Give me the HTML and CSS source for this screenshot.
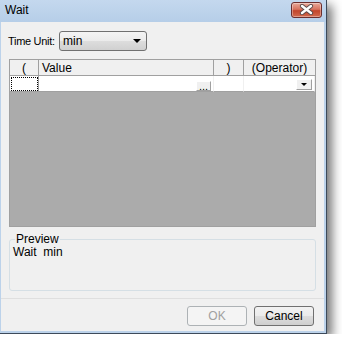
FILE: index.html
```html
<!DOCTYPE html>
<html lang="en">
<head>
  <meta charset="UTF-8">
  <title>Wait</title>
  <link rel="stylesheet" href="styles.css">
</head>
<body>

<div class="window">
  <!-- Title Bar -->
  <div class="titlebar">
    <span class="title">Wait</span>
    <button class="close-btn" type="button">
      <svg width="15" height="11" viewBox="0 0 15 11">
        <path d="M3 2 L12 9 M12 2 L3 9" stroke="#5a4a4a" stroke-width="4.2" stroke-linecap="round"/>
        <path d="M3 2 L12 9 M12 2 L3 9" stroke="#ffffff" stroke-width="2.4" stroke-linecap="round"/>
      </svg>
    </button>
  </div>

  <div class="client">
    <div class="unit-row">
      <span class="unit-label">Time Unit:</span>
      <div class="combo">
        <span>min</span>
        <span class="arrow"></span>
      </div>
    </div>

    <!-- Grid -->
    <div class="grid">
      <div class="grid-head">
        <div class="hcell center">(</div>
        <div class="hcell">Value</div>
        <div class="hcell center">)</div>
        <div class="hcell center last">(Operator)</div>
      </div>
      <div class="grid-row">
        <div class="dcell focus"></div>
        <div class="dcell end"><span class="dots-btn">...</span></div>
        <div class="dcell"></div>
        <div class="dcell end last"><span class="drop-btn"><span class="arrow small"></span></span></div>
      </div>
      <div class="grid-empty"></div>
    </div>

    <!-- Preview -->
    <div class="group">
      <span class="legend">Preview</span>
      <div class="preview-text">Wait&nbsp;&nbsp;min</div>
    </div>

    <div class="button-bar">
      <button type="button" class="dlg-btn disabled">OK</button>
      <button type="button" class="dlg-btn">Cancel</button>
    </div>
  </div>
</div>

</body>
</html>
```

FILE: styles.css
```css
body {
  margin: 0;
  background: #ffffff;
  font-family: "Liberation Sans", Arial, sans-serif;
  font-size: 11px;
  color: #000;
}
.window {
  width: 327px;
  height: 334px;
  padding: 0 2px 2px 1px;
  box-sizing: border-box;
  background: #bcd2ea;
  border-right: 1px solid #3d4a5a;
  border-bottom: 1px solid #3d4a5a;
  box-shadow: 5px 5px 10px rgba(0,0,0,0.55);
  display: flex;
  flex-direction: column;
}
.titlebar {
  height: 22px;
  margin: 0 -2px 0 -1px;
  background: linear-gradient(#c4d8ee, #b6cee8);
  display: flex;
  align-items: center;
  justify-content: space-between;
  padding: 0 4px 0 5px;
  box-sizing: border-box;
}
.title {
  font-size: 12px;
  padding-bottom: 2px;
}
.close-btn {
  width: 31px;
  height: 16px;
  margin-bottom: 3px;
  padding: 0;
  border: 1px solid #6b2e2e;
  border-radius: 3px;
  background: linear-gradient(#e9a99a 0%, #d7735f 45%, #c2452b 55%, #d26a4e 100%);
  display: flex;
  align-items: center;
  justify-content: center;
  box-shadow: inset 0 0 0 1px rgba(255,255,255,0.35);
}
.client {
  flex: 1;
  background: #f0f0f0;
  padding: 9px 8px 0 8px;
  display: flex;
  flex-direction: column;
}
.unit-row {
  display: flex;
  align-items: center;
  height: 20px;
}
.unit-label {
  width: 51px;
  margin-left: -1px;
  flex-shrink: 0;
  white-space: nowrap;
  font-size: 11px;
  letter-spacing: -0.3px;
}
.combo {
  width: 88px;
  height: 20px;
  box-sizing: border-box;
  border: 1px solid #707070;
  border-radius: 3px;
  background: linear-gradient(#f4f4f4 0%, #ebebeb 50%, #dddddd 51%, #d0d0d0 100%);
  display: flex;
  align-items: center;
  justify-content: space-between;
  padding: 0 5px 0 3px;
  font-size: 12px;
}
.arrow {
  width: 0;
  height: 0;
  border-left: 4px solid transparent;
  border-right: 4px solid transparent;
  border-top: 4px solid #000;
}
.arrow.small {
  border-left-width: 3px;
  border-right-width: 3px;
  border-top-width: 3px;
}
.grid {
  margin-top: 8px;
  height: 168px;
  box-sizing: border-box;
  border: 1px solid #a0a0a0;
  display: flex;
  flex-direction: column;
}
.grid-head, .grid-row {
  display: grid;
  grid-template-columns: 29px 175px 30px 1fr;
}
.hcell {
  height: 16px;
  box-sizing: border-box;
  border-right: 1px solid #a0a0a0;
  border-bottom: 1px solid #a0a0a0;
  background: #f0f0f0;
  padding: 1px 3px 0 3px;
  font-size: 12px;
  line-height: 14px;
}
.center {
  text-align: center;
}
.last {
  border-right: none;
}
.dcell {
  height: 16px;
  box-sizing: border-box;
  border-right: 1px solid #f0f0f0;
  border-bottom: 1px solid #a0a0a0;
  background: #fff;
  display: flex;
  justify-content: flex-end;
  align-items: flex-end;
}
.focus {
  outline: 1px dotted #000;
  outline-offset: -2px;
  border-right-color: #a0a0a0;
}
.dots-btn {
  width: 15px;
  height: 10px;
  margin-right: 2px;
  box-sizing: border-box;
  background: #f0f0f0;
  border-top: 1px solid #fff;
  border-left: 1px solid #fff;
  border-right: 1px solid #a0a0a0;
  border-bottom: 1px solid #a0a0a0;
  font-size: 11px;
  line-height: 8px;
  text-align: center;
  overflow: hidden;
}
.drop-btn {
  width: 16px;
  height: 11px;
  margin: 0 2px 1px 0;
  box-sizing: border-box;
  background: #f0f0f0;
  border-top: 1px solid #fff;
  border-left: 1px solid #fff;
  border-right: 1px solid #a0a0a0;
  border-bottom: 1px solid #a0a0a0;
  display: flex;
  align-items: center;
  justify-content: center;
}
.grid-empty {
  flex: 1;
  background: #ababab;
}
.group {
  position: relative;
  margin-top: 12px;
  height: 52px;
  box-sizing: border-box;
  border: 1px solid #d5dfe5;
  border-radius: 3px;
  padding: 6px 3px 0 3px;
}
.legend {
  position: absolute;
  top: -7px;
  left: 5px;
  padding: 0 1px;
  background: #f0f0f0;
  font-size: 12px;
  line-height: 13px;
}
.preview-text {
  font-size: 12px;
  line-height: 13px;
}
.button-bar {
  margin: 7px -8px 0 -8px;
  border-top: 1px solid #dfdfdf;
  padding: 7px 10px 0 0;
  display: flex;
  justify-content: flex-end;
  gap: 7px;
}
.dlg-btn {
  width: 60px;
  height: 20px;
  padding: 0;
  border: 1px solid #707070;
  border-radius: 3px;
  background: linear-gradient(#f2f2f2 0%, #ebebeb 50%, #dddddd 51%, #cfcfcf 100%);
  font-family: "Liberation Sans", Arial, sans-serif;
  font-size: 12px;
  color: #000;
}
.dlg-btn.disabled {
  border-color: #adb2b5;
  background: #f4f4f4;
  color: #a0a0a0;
}
```
